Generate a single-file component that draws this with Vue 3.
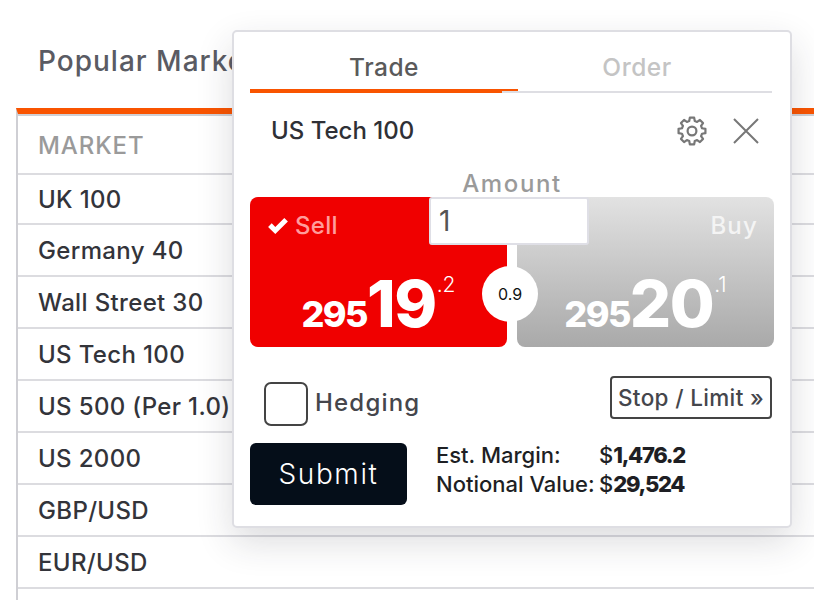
<script setup>
const markets = ['UK 100', 'Germany 40', 'Wall Street 30', 'US Tech 100', 'US 500 (Per 1.0)', 'US 2000', 'GBP/USD', 'EUR/USD']

function gearPath() {
  const cx = 15, cy = 15, teeth = 8, outer = 13.6, inner = 10.4
  const pts = []
  for (let i = 0; i < teeth; i++) {
    const a = (i * 2 * Math.PI) / teeth - Math.PI / 2
    const w = 0.2, g = 0.27
    const list = [[inner, a - g], [outer, a - w + 0.04], [outer, a + w - 0.04], [inner, a + g]]
    for (const [r, t] of list) pts.push(`${(cx + r * Math.cos(t)).toFixed(2)} ${(cy + r * Math.sin(t)).toFixed(2)}`)
  }
  return 'M' + pts.join('L') + 'Z'
}
const gear = gearPath()
</script>

<template>
  <div class="page">
    <h2 class="title">Popular Markets</h2>
    <div class="table">
      <div class="row head">MARKET</div>
      <div v-for="m in markets" :key="m" class="row">{{ m }}</div>
      <div class="row"></div>
    </div>

    <section class="popup">
      <div class="tabs">
        <div class="tab active">Trade</div>
        <div class="tab other">Order</div>
      </div>
      <div class="instrument">
        <span class="name">US Tech 100</span>
        <div class="icons">
          <svg viewBox="0 0 30 30" width="30" height="30" fill="none" stroke="#777" stroke-width="2.2">
            <path :d="gear" stroke-linejoin="round" />
            <circle cx="15" cy="15" r="4.4" />
          </svg>
          <svg viewBox="0 0 26 26" width="26" height="26" fill="none" stroke="#777" stroke-width="2">
            <path d="M1 1 L25 25 M25 1 L1 25" />
          </svg>
        </div>
      </div>
      <div class="amount-label">Amount</div>
      <div class="prices">
        <div class="panel sell">
          <div class="side"><svg viewBox="0 0 24 20" width="22" height="18" fill="#fff"><path d="M1 11 L5 7 L9 11 L19 1 L23 5 L9 19 Z" /></svg><span>Sell</span></div>
          <div class="quote"><span class="small">295</span><span class="big">19</span><span class="frac">.2</span></div>
        </div>
        <div class="panel buy">
          <div class="side right"><span>Buy</span></div>
          <div class="quote"><span class="small">295</span><span class="big">20</span><span class="frac">.1</span></div>
        </div>
        <div class="amount-input">1</div>
        <div class="spread">0.9</div>
      </div>
      <div class="options">
        <label class="hedge"><span class="box"></span><span class="hedge-text">Hedging</span></label>
        <button class="stop">Stop / Limit »</button>
      </div>
      <div class="footer">
        <button class="submit">Submit</button>
        <div class="info">
          <div class="k">Est. Margin:</div><div>$<b>1,476.2</b></div>
          <div class="k">Notional Value:</div><div>$<b>29,524</b></div>
        </div>
      </div>
    </section>
  </div>
</template>

<style>
html, body { margin: 0; background: #fff; overflow: hidden; }
</style>

<style scoped>
.page {
  position: relative;
  width: 814px;
  height: 600px;
  overflow: hidden;
  padding: 0 0 0 16px;
  box-sizing: border-box;
  font-family: Inter, "Liberation Sans", sans-serif;
  color: #2b2b30;
}
.title {
  margin: 0;
  height: 108px;
  padding: 44px 0 0 22px;
  box-sizing: border-box;
  font-size: 28px;
  line-height: 34px;
  font-weight: 500;
  color: #5a5b63;
  letter-spacing: 1px;
  white-space: nowrap;
}
.table {
  border-top: 6px solid #f95400;
  border-left: 2px solid #cfcfd4;
  box-shadow: inset 0 2px 0 #cfcfd4;
}
.row {
  height: 52px;
  box-sizing: border-box;
  padding-left: 20px;
  border-bottom: 2px solid #dcdce0;
  display: flex;
  align-items: center;
  font-size: 24px;
  font-weight: 500;
  letter-spacing: 0.35px;
  color: #33343a;
}
.row.head { height: 61px; padding-top: 3px; color: #9a9a9a; letter-spacing: 0.9px; }
.row.head + .row { height: 50px; }
.popup {
  position: absolute;
  left: 232px;
  top: 30px;
  width: 560px;
  height: 498px;
  box-sizing: border-box;
  background: #fff;
  border: 2px solid #dedee3;
  border-radius: 5px;
  padding: 0 15px 0 16px;
  box-shadow: 0 14px 36px rgba(40, 40, 50, 0.16);
  display: flex;
  flex-direction: column;
}
.tabs {
  display: flex;
  width: 522px;
  height: 61px;
  box-sizing: border-box;
  border-bottom: 2px solid #dedee3;
}
.tab {
  text-align: center;
  padding-top: 19px;
  font-size: 24.5px;
  line-height: 32px;
  font-weight: 500;
  color: #c4c4c4;
  letter-spacing: 0.5px;
}
.tab.active {
  position: relative;
  flex: 0 0 268px;
  box-sizing: border-box;
  color: #5a5a5a;
  border-bottom: 2px solid #f95400;
}
.tab.active::after {
  content: "";
  position: absolute;
  left: 0;
  bottom: -4px;
  width: 252px;
  height: 2px;
  background: #f95400;
}
.tab.other { flex: 0 0 254px; box-sizing: border-box; padding-right: 16px; }
.instrument {
  display: flex;
  justify-content: space-between;
  align-items: center;
  height: 76px;
  padding: 0 13px 0 21px;
  width: 522px;
  box-sizing: border-box;
}
.name { font-size: 24px; font-weight: 500; color: #2f3036; position: relative; top: -1px; }
.icons { display: flex; align-items: center; gap: 26px; }
.amount-label {
  text-align: center;
  width: 524px;
  font-size: 24px;
  line-height: 30px;
  height: 28px;
  font-weight: 500;
  color: #9a9a9a;
  letter-spacing: 1.6px;
}
.prices {
  position: relative;
  display: flex;
  gap: 10px;
  width: 524px;
  height: 150px;
}
.panel {
  flex: 1;
  border-radius: 8px;
  color: #fff;
  display: flex;
  flex-direction: column;
  justify-content: space-between;
}
.sell { background: #f00000; }
.buy { background: linear-gradient(#e2e2e2, #a9a9a9); }
.side {
  display: flex;
  align-items: center;
  gap: 6px;
  padding: 13px 16px 0 17px;
  font-size: 24px;
  line-height: 32px;
  font-weight: 500;
  color: #ff9c9c;
  letter-spacing: 0.3px;
}
.side.right { justify-content: flex-end; color: #f4f4f4; letter-spacing: 1.2px; }
.quote {
  display: flex;
  align-items: baseline;
  justify-content: center;
  height: 76px;
  margin-bottom: 5px;
  font-weight: 800;
  color: #fff;
  line-height: 76px;
}
.small { font-size: 36px; letter-spacing: -1.6px; }
.big { font-size: 65px; letter-spacing: -1.5px; }
.frac {
  font-size: 21px;
  font-weight: 300;
  align-self: flex-start;
  line-height: 22px;
  margin-top: 8px;
  margin-left: 1px;
}
.amount-input {
  position: absolute;
  left: 179px;
  top: 0;
  width: 160px;
  height: 48px;
  box-sizing: border-box;
  background: #fff;
  border: 2px solid #dfdfe6;
  border-radius: 3px;
  padding-left: 8px;
  font-size: 28px;
  line-height: 44px;
  color: #555;
}
.spread {
  position: absolute;
  left: 232px;
  top: 69px;
  width: 56px;
  height: 56px;
  border-radius: 50%;
  background: #fff;
  display: flex;
  align-items: center;
  justify-content: center;
  font-size: 16px;
  color: #111;
}
.options {
  display: flex;
  justify-content: space-between;
  align-items: flex-start;
  width: 522px;
  margin-top: 29px;
  height: 67px;
}
.hedge {
  display: flex;
  align-items: center;
  gap: 7px;
  margin-left: 14px;
  margin-top: 6px;
  font-size: 24px;
  font-weight: 500;
  color: #45464c;
  letter-spacing: 1.2px;
}
.hedge-text { position: relative; top: -2px; }
.box {
  width: 44px;
  height: 44px;
  box-sizing: border-box;
  border: 2px solid #444;
  border-radius: 7px;
}
.stop {
  width: 162px;
  height: 43px;
  box-sizing: border-box;
  padding: 0;
  background: #fff;
  border: 2px solid #444;
  border-radius: 4px;
  font-family: inherit;
  font-size: 22.5px;
  font-weight: 500;
  color: #45464c;
  letter-spacing: 0.35px;
}
.footer { display: flex; align-items: center; gap: 29px; height: 62px; }
.submit {
  width: 157px;
  height: 62px;
  background: #050e19;
  color: #fff;
  border: 0;
  border-radius: 6px;
  font-family: inherit;
  font-size: 28px;
  font-weight: 300;
  letter-spacing: 1.6px;
}
.info {
  display: grid;
  grid-template-columns: 163px auto;
  font-size: 22px;
  line-height: 29px;
  font-weight: 500;
  color: #1e1f24;
  margin-top: -8px;
}
.info b { font-weight: 800; letter-spacing: -1.3px; }
</style>
